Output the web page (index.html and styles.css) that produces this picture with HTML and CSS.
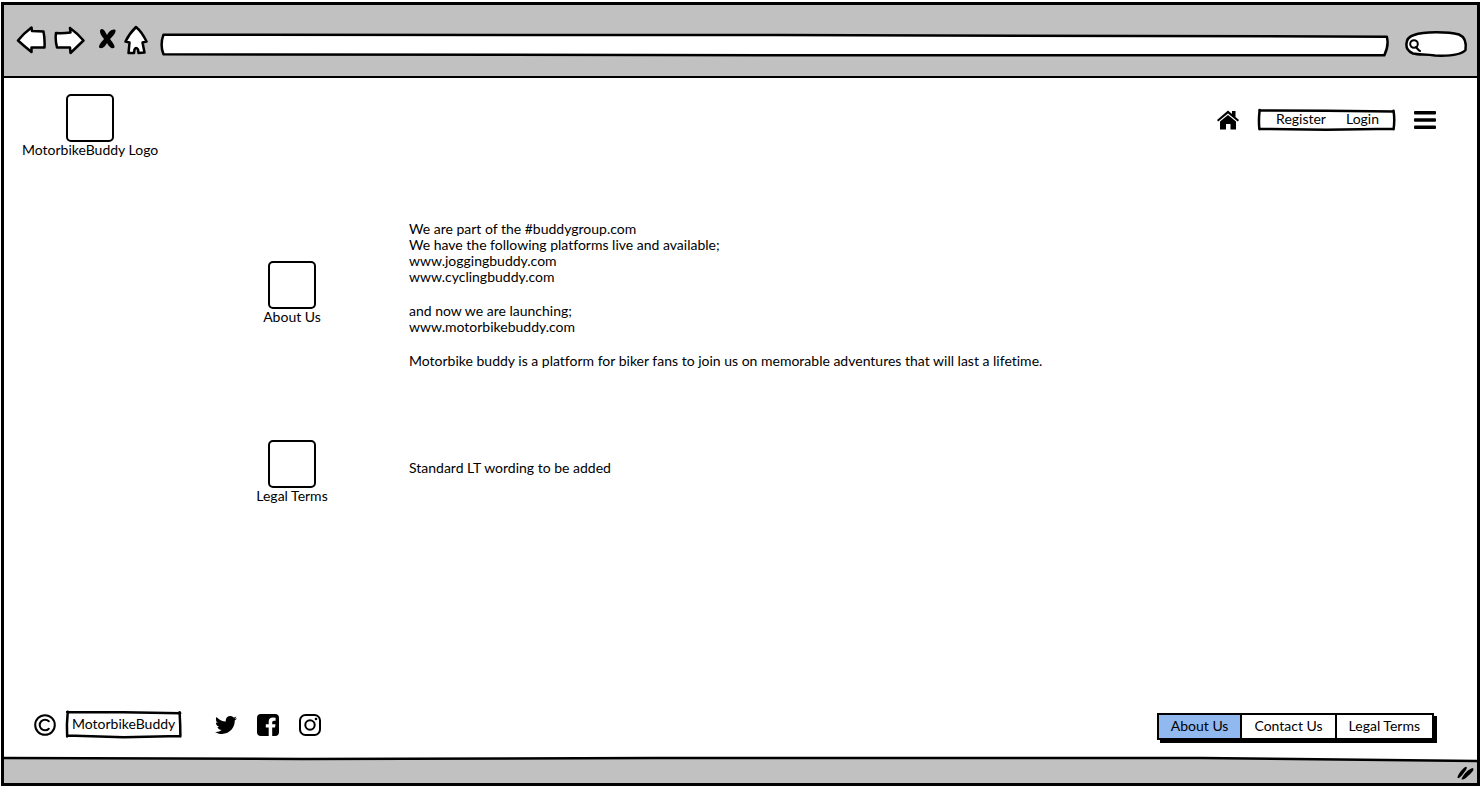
FILE: index.html
```
<!DOCTYPE html>
<html lang="en">
<head>
<meta charset="utf-8">
<meta name="viewport" content="width=device-width, initial-scale=1">
<title>MotorbikeBuddy</title>
<link rel="stylesheet" href="styles.css">
</head>
<body>
<div class="window">
  <div class="toolbar">
    <div class="tools">
      <button class="tool" type="button" aria-label="Back"><svg width="30" height="30" viewBox="0 0 30 30"><path class="ink" d="M2 15.500Q7 9 15.500 2.500L16 6 27.500 6.500Q29 14 28.500 22.500L15.500 22.500 15.500 27Q8 21 2 15.500Z"/></svg></button>
      <button class="tool tool-forward" type="button" aria-label="Forward"><svg width="32" height="30" viewBox="0 0 32 30"><path class="ink" d="M2 8Q9 8.500 16.500 7.500L16 3Q23 8 29.500 15.500L16.500 28 16 22.500 3 22.500Q1 15 2 8Z"/></svg></button>
      <button class="tool tool-stop" type="button" aria-label="Stop"><svg width="18" height="30" viewBox="0 0 18 30"><path d="M2.500 4.500C5 2.500 7 6 9 10 11 6 14.500 3.500 17.500 5 18 8 15 11 12 14 14 17 17 20 16.500 22.500 14 25 10.500 21 9 18 7 22 4 24.500 1 22.500 1 19 4 16.500 6 14 3 10 1 7 2.500 4.500Z"/></svg></button>
      <button class="tool tool-home" type="button" aria-label="Home page"><svg width="24" height="30" viewBox="0 0 24 30"><path class="ink" d="M12 2Q18 7 22.500 16.500L18.500 17.500 20.500 27.500 14.500 28 14 24.500Q12 21.500 10.500 24.500L10 28 4.500 28 5.500 17.500 1.500 16.500Q5 9 12 2Z"/></svg></button>
    </div>
    <div class="address">
      <svg class="sketch" viewBox="0 0 100 100" preserveAspectRatio="none"><path class="ink" d="M.2 3Q-.1 50 .2 92L50 97 99.700 97Q100.100 50 99.900 12L50 5Z"/></svg>
      <input class="field" type="text" aria-label="Address">
    </div>
    <div class="search">
      <svg class="sketch" viewBox="0 0 62 26" preserveAspectRatio="none"><path class="ink" d="M9 4C20 0 44 1 54 3.500 60 6 61.500 12 60.500 19 56 24 42 25 30 24.500 20 23 14 24 8 22.500-1 19-1 7 9 4Z"/></svg>
      <svg class="lens" width="12" height="13" viewBox="0 0 12 13"><circle class="line" cx="5" cy="5" r="3.800"/><path class="line" d="M7 8 10 11.500M8 9.500 11 12"/></svg>
      <input class="field" type="search" aria-label="Search">
    </div>
  </div>

  <header class="header">
    <a class="badge" href="#"><span class="frame"></span>MotorbikeBuddy Logo</a>
    <nav class="nav" aria-label="Account">
      <a href="#" aria-label="Home"><svg class="icon" width="22" height="22" viewBox="0 0 22 22"><path d="M11 6 19 12.500V20.500H13.500V15H9V20.500H3V12.500Z"/><path d="M11 1.500 15 5V2H18.500V8L22 11 20.800 12.400 11 4.500 1.200 12.400 0 11Z"/></svg></a>
      <div class="account">
        <svg class="sketch" viewBox="0 0 100 100" preserveAspectRatio="none"><path class="line" d="M1 6 50 8 99 11M99 8Q100 50 99 92M99 90 50 94 1 90M1 92Q.3 50 1.200 5"/></svg>
        <a href="#">Register</a>
        <a href="#">Login</a>
      </div>
      <button class="plain" type="button" aria-label="Menu"><svg class="icon" width="22" height="22" viewBox="0 0 22 22"><rect y="2" width="22" height="3.500" rx="1"/><rect y="9.300" width="22" height="3.500" rx="1"/><rect y="16.600" width="22" height="3.500" rx="1"/></svg></button>
    </nav>
  </header>

  <main class="main">
    <section class="row">
      <h2 class="badge"><span class="frame"></span>About Us</h2>
      <div class="copy">
        <p>We are part of the #buddygroup.com<br>We have the following platforms live and available;<br>www.joggingbuddy.com<br>www.cyclingbuddy.com</p>
        <p>and now we are launching;<br>www.motorbikebuddy.com</p>
        <p>Motorbike buddy is a platform for biker fans to join us on memorable adventures that will last a lifetime.</p>
      </div>
    </section>
    <section class="row">
      <h2 class="badge"><span class="frame"></span>Legal Terms</h2>
      <div class="copy copy-short"><p>Standard LT wording to be added</p></div>
    </section>
  </main>

  <footer class="footer">
    <div class="owner">
      <svg class="icon" width="22" height="22" viewBox="0 0 22 22" role="img" aria-label="Copyright"><circle class="line" cx="11" cy="11" r="9.800"/><path class="line" d="M14.800 7.300A5.300 5.300 0 1 0 14.800 14.700"/></svg>
      <a class="brand" href="#">
        <svg class="sketch" viewBox="0 0 100 100" preserveAspectRatio="none"><path class="line" d="M1 4 50 5 99 8M98.500 5 99 50 99.200 94M99 93 50 97 1 91M1 94 .8 50 1.500 3"/></svg>
        MotorbikeBuddy</a>
      <div class="social">
        <a href="#" aria-label="Twitter"><svg class="icon" width="22" height="22" viewBox="0 0 512 512"><path d="M459.370 151.716c.325 4.548.325 9.097.325 13.645 0 138.720-105.583 298.558-298.558 298.558-59.452 0-114.680-17.219-161.137-47.106 8.447.974 16.568 1.299 25.340 1.299 49.055 0 94.213-16.568 130.274-44.832-46.132-.975-84.792-31.188-98.112-72.772 6.498.974 12.995 1.624 19.818 1.624 9.421 0 18.843-1.300 27.614-3.573-48.081-9.747-84.143-51.980-84.143-102.985v-1.299c13.969 7.797 30.214 12.670 47.431 13.319-28.264-18.843-46.781-51.005-46.781-87.391 0-19.492 5.197-37.360 14.294-52.954 51.655 63.675 129.300 105.258 216.365 109.807-1.624-7.797-2.599-15.918-2.599-24.040 0-57.828 46.782-104.934 104.934-104.934 30.213 0 57.502 12.670 76.670 33.137 23.715-4.548 46.456-13.320 66.599-25.340-7.798 24.366-24.366 44.833-46.132 57.827 21.117-2.273 41.584-8.122 60.426-16.243-14.292 20.791-32.161 39.308-52.628 54.253z"/></svg></a>
        <a href="#" aria-label="Facebook"><svg class="icon" width="22" height="22" viewBox="0 0 22 22"><path d="M4 0H18Q22 0 22 4V18Q22 22 18 22H15.200V13.500H18L18.500 10.200H15.200V8.300Q15.200 6.800 16.800 6.800H18.600V3.700Q17.500 3.500 16 3.500 11.700 3.500 11.700 7.700V10.200H8.800V13.500H11.700V22H4Q0 22 0 18V4Q0 0 4 0Z"/></svg></a>
        <a href="#" aria-label="Instagram"><svg class="icon" width="22" height="22" viewBox="0 0 22 22"><rect class="line" x="1" y="1" width="20" height="20" rx="5.500"/><circle class="line" cx="11" cy="11" r="4.700"/><circle cx="17" cy="5" r="1.300"/></svg></a>
      </div>
    </div>
    <nav class="tabs" aria-label="Information">
      <a class="tab tab-current" href="#" aria-current="page">About Us</a>
      <a class="tab" href="#">Contact Us</a>
      <a class="tab" href="#">Legal Terms</a>
    </nav>
  </footer>

  <div class="statusbar">
    <svg class="sketch" viewBox="0 0 1476 26" preserveAspectRatio="none"><path class="shade" d="M0 1 1200 1 1476 4V26H0Z"/><path class="line" d="M0 1 300 2 650 1 1200 1 1476 4"/></svg>
    <svg class="grip" width="17" height="14" viewBox="0 0 17 14"><path d="M.5 11C2 7 6 2 9 .8 11.500 1.500 8 5.500 6 8 4 10.500 1 14 .5 11ZM4.500 13C6.500 8 11 3.500 15.500 2 18.500 3 14 7.500 11 10 9 12.500 5 14.500 4.500 13Z"/></svg>
  </div>
</div>
</body>
</html>
```
FILE: styles.css
```
* { box-sizing: border-box; }

body {
  margin: 0;
  padding: 2px 2px 2px 1px;
  background: #fff;
  color: #000;
  font: 14px/16px Lato, "Liberation Sans", sans-serif;
  font-variant-ligatures: none;
}

a { color: inherit; text-decoration: none; }
p, h2 { margin: 0; }
svg { display: block; fill: #000; }

.ink, .line {
  stroke: #000;
  stroke-width: 2.5px;
  stroke-linecap: round;
  stroke-linejoin: round;
  vector-effect: non-scaling-stroke;
}
.ink { fill: #fff; }
.line { fill: none; }
.shade { fill: #c1c1c1; }
.icon .line, .lens .line { stroke-width: 2px; }

.sketch {
  position: absolute;
  inset: 0;
  width: 100%;
  height: 100%;
  overflow: visible;
}

.window {
  display: flex;
  flex-direction: column;
  min-height: calc(100vh - 4px);
  border: 3px solid #000;
}

.toolbar {
  display: flex;
  align-items: center;
  height: 73px;
  padding: 0 10px 0 12px;
  border-bottom: 2px solid #000;
  background: #c1c1c1;
}
.tools { display: flex; align-items: center; padding-bottom: 2px; }
.tool, .plain { padding: 0; border: 0; background: none; }
.tool-forward { margin-left: 8px; }
.tool-stop { margin-left: 12px; }
.tool-home { margin-left: 8px; }
.address { position: relative; flex: 1; height: 22px; margin: 8px 17px 0 13px; }
.search { position: relative; width: 62px; height: 26px; margin-top: 6px; }
.lens { position: absolute; left: 4px; top: 8px; }
.field {
  position: relative;
  display: block;
  width: 100%;
  height: 100%;
  padding: 0 8px;
  border: 0;
  background: none;
  font: inherit;
}
.search .field { padding-left: 20px; }

.header {
  display: flex;
  justify-content: space-between;
  align-items: flex-start;
  padding: 16px 41px 0 18px;
}
.badge {
  display: flex;
  flex-direction: column;
  align-items: center;
  font-size: 14px;
  font-weight: 400;
}
.frame {
  width: 48px;
  height: 48px;
  border: 2px solid #000;
  border-radius: 5px;
}
.nav { display: flex; align-items: center; gap: 19px; padding-top: 15px; }
.account {
  position: relative;
  display: flex;
  gap: 20px;
  padding: 2px 16px 4px 18px;
}
.account a { position: relative; }

.main { flex: 1; padding-top: 59px; }
.row {
  display: grid;
  grid-template-columns: 80px 1fr;
  column-gap: 77px;
  align-items: center;
  padding-left: 248px;
}
.row + .row { margin-top: 71px; }
.copy { display: flex; flex-direction: column; gap: 18px; padding-top: 4px; }
.copy-short { padding: 0 0 8px; }

.footer {
  display: flex;
  justify-content: space-between;
  align-items: center;
  padding: 0 43px 16px 30px;
}
.owner, .social { display: flex; align-items: center; }
.owner { padding-bottom: 3px; }
.social { gap: 20px; margin-left: 34px; }
.brand { position: relative; margin-left: 10px; padding: 5px 6px 6px; }
.tabs {
  display: flex;
  border: 2px solid #000;
  background: #fff;
  box-shadow: 3px 3px 0 #000;
}
.tab { padding: 3px 12px 4px; }
.tab + .tab { border-left: 2px solid #000; }
.tab-current { background: #92b8f0; }

.statusbar { position: relative; height: 26px; }
.grip { position: absolute; right: 3px; bottom: 3px; }
```
